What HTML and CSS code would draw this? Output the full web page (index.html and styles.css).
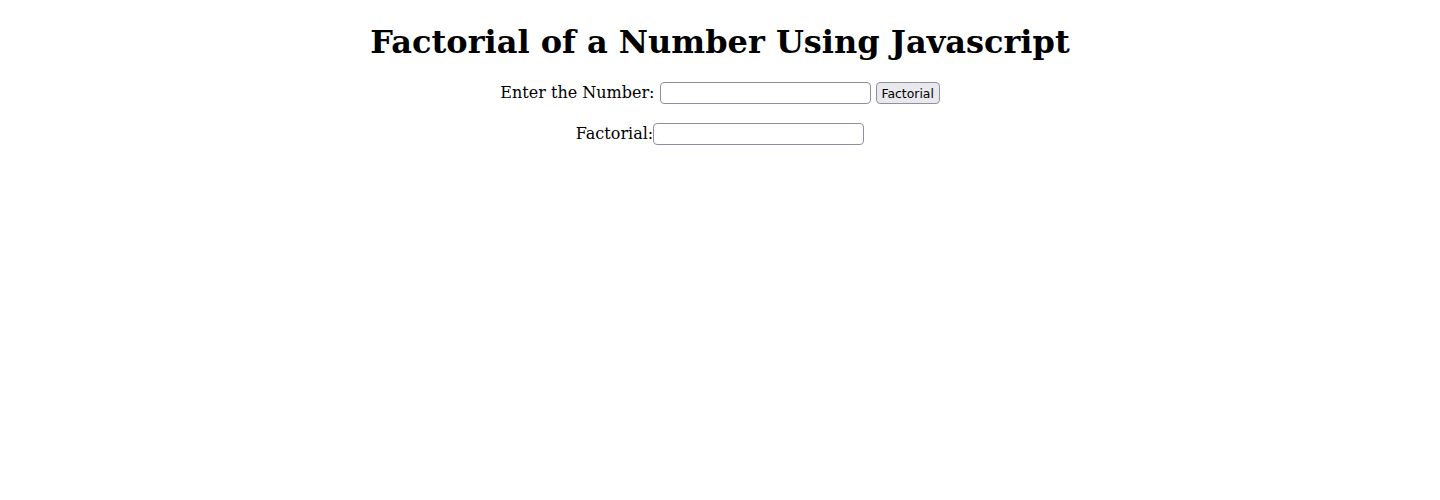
FILE: index.html
```html
<!DOCTYPE html>
<html>
<head>
<meta charset="utf-8">
<title>Factorial</title>
<link rel="stylesheet" href="styles.css">
</head>
<body class="page">
<h1 class="title">Factorial of a Number Using Javascript</h1>
<div class="form">
  <p class="row">Enter the Number: <input type="text" class="field"> <button class="btn">Factorial</button></p>
  <p class="row">Factorial:<input type="text" class="field"></p>
</div>
</body>
</html>
```
FILE: styles.css
```css
.page {
  margin: 8px;
  font-family: "DejaVu Serif", serif;
  font-size: 16px;
  color: #000;
  background: #fff;
}
.title {
  text-align: center;
  font-size: 32px;
  margin: 15px 0 21px;
}
.form {
  text-align: center;
}
.row {
  margin: 16px 0;
  height: 25px;
}
.field {
  box-sizing: border-box;
  width: 211px;
  height: 22px;
  border: 1px solid #8f8f9d;
  border-radius: 4px;
  padding: 1px 2px;
  background: #fff;
  font-family: "DejaVu Sans", sans-serif;
  font-size: 13.33px;
  vertical-align: middle;
}
.btn {
  box-sizing: border-box;
  width: 64px;
  height: 22px;
  padding: 0;
  border: 1px solid #8f8f9d;
  border-radius: 4px;
  background: #e9e9ed;
  color: #000;
  font-family: "DejaVu Sans", sans-serif;
  font-size: 12.4px;
  vertical-align: middle;
}
```
